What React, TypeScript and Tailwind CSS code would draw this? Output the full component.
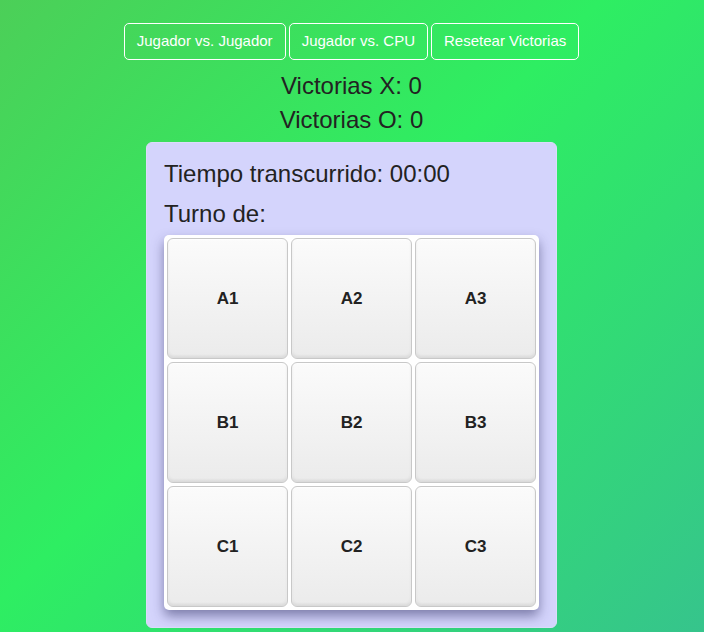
import React from 'react'

const cells = ['A1', 'A2', 'A3', 'B1', 'B2', 'B3', 'C1', 'C2', 'C3']

export default function App() {
  return (
    <div className="min-h-[632px] w-full bg-[linear-gradient(135deg,#4ccf58_0%,#2eee62_45%,#36c48c_100%)] font-['Liberation_Sans',Arial,sans-serif] text-[#222]">
      <div className="flex flex-col items-center pr-[1px] pt-[23px]">
        {/* mode buttons */}
        <div className="flex gap-[3px]">
          <button className="h-[37px] rounded-[5px] border border-white px-[12px] text-[15px] text-white">Jugador vs. Jugador</button>
          <button className="h-[37px] rounded-[5px] border border-white px-[12px] text-[15px] text-white">Jugador vs. CPU</button>
          <button className="h-[37px] rounded-[5px] border border-white px-[12px] text-[15px] text-white">Resetear Victorias</button>
        </div>

        {/* score */}
        <p className="mt-[9px] text-[24px] leading-[34px]">Victorias X: 0</p>
        <p className="text-[24px] leading-[34px]">Victorias O: 0</p>

        {/* game panel */}
        <div className="mt-[5px] w-[411px] rounded-[6px] border border-[#dcdcfa] bg-[#d4d4fc] px-[17px] pb-[17px] pt-[15px]">
          <p className="text-[24px] leading-[32px]">Tiempo transcurrido: 00:00</p>
          <p className="mt-[10px] text-[24px] leading-[28px]">Turno de:</p>
          <div className="mt-[7px] grid grid-cols-3 gap-[3px] rounded-[5px] bg-white p-[3px] shadow-[0_6px_12px_rgba(40,40,90,0.5)]">
            {cells.map((c) => (
              <button
                key={c}
                className="flex h-[121px] items-center justify-center rounded-[6px] border border-[#c8c8c8] bg-[linear-gradient(180deg,#fbfbfb,#ebebeb)] text-[17px] font-bold text-[#222] shadow-[inset_0_-2px_3px_rgba(0,0,0,0.08),inset_0_1px_2px_rgba(255,255,255,0.9)]"
              >
                {c}
              </button>
            ))}
          </div>
        </div>
      </div>
    </div>
  )
}
